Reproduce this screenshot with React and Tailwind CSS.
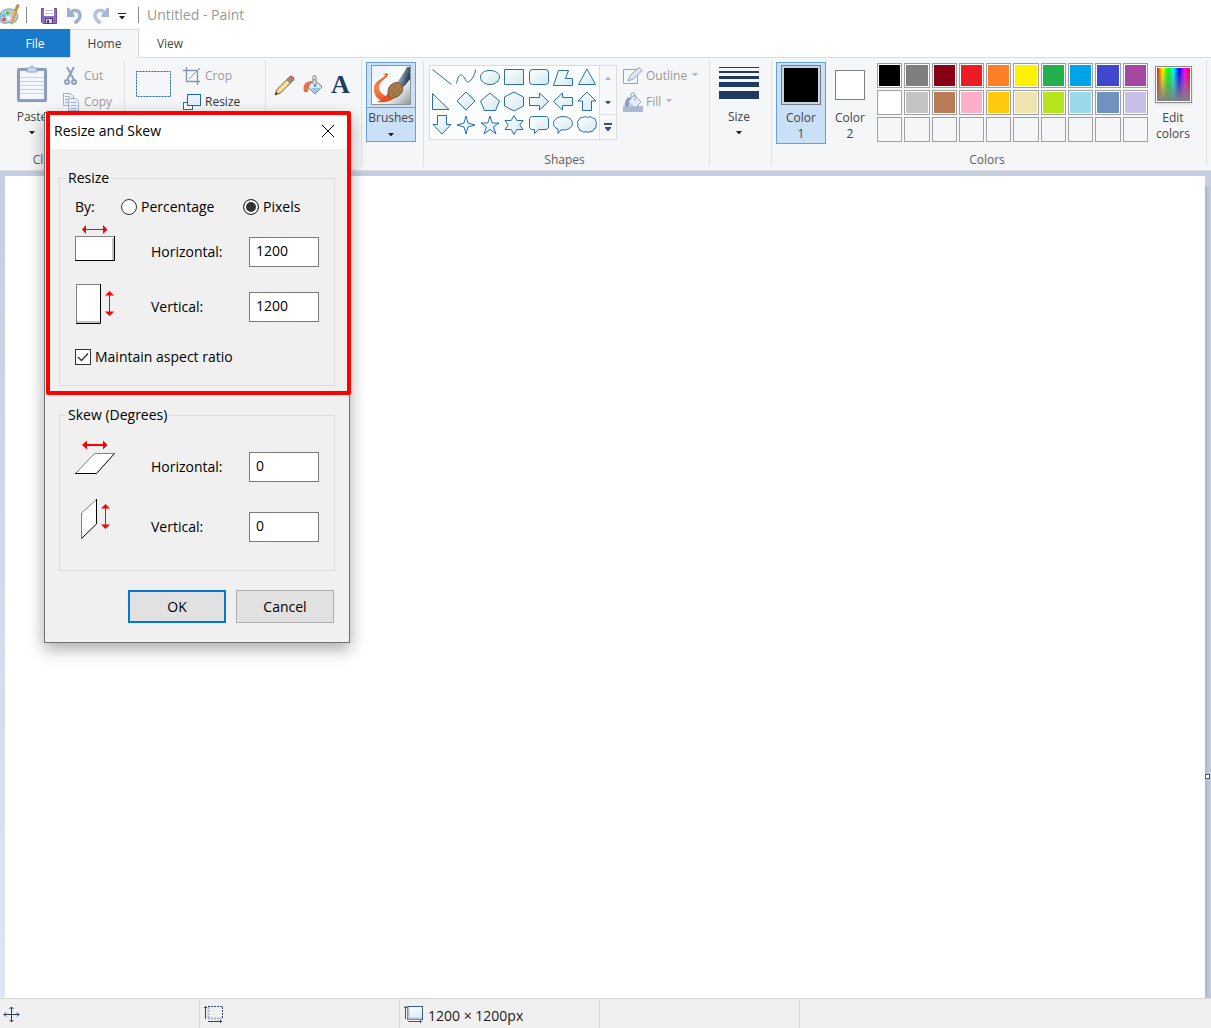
import React, { useState } from 'react'

const PALETTE = [
  '#000000', '#7f7f7f', '#880015', '#ed1c24', '#ff7f27', '#fff200', '#22b14c', '#00a2e8', '#3f48cc', '#a349a4',
  '#ffffff', '#c3c3c3', '#b97a57', '#ffaec9', '#ffc90e', '#efe4b0', '#b5e61d', '#99d9ea', '#7092be', '#c8bfe7',
  null, null, null, null, null, null, null, null, null, null,
]

// Outlines are drawn on a 24x24 cell
const SHAPES = [
  ['Line', 'M2.5 3.5 21.5 18.5'],
  ['Curve', 'M2.5 17.5C4 9 7 7 9.5 10.5S13 19 17 14C20 10 21.5 7 21.5 3.5'],
  ['Oval', 'M12 4.5C17.5 4.5 21.5 7.5 21.5 11S17.5 18.5 12 18.5 2.5 15 2.5 11 6.5 4.5 12 4.5Z'],
  ['Rectangle', 'M2.5 3.5H21.5V18.5H2.5Z'],
  ['Rounded rectangle', 'M5.5 3.5H18.5A3 3 0 0 1 21.5 6.5V15.500A3 3 0 0 1 18.5 18.5H5.5A3 3 0 0 1 2.5 15.5V6.5A3 3 0 0 1 5.5 3.5Z'],
  ['Polygon', 'M7.5 4.5H17.5L14.5 12.5H21.5V19.5H2.5Z'],
  ['Triangle', 'M12 3 20.5 18.500H3.5Z'],
  ['Right triangle', 'M2.5 3.500V19.500H19Z'],
  ['Diamond', 'M12 2 21 11 12 20 3 11Z'],
  ['Pentagon', 'M12 3 21.500 11 17.500 20.500H6.500L2.500 11Z'],
  ['Hexagon', 'M12 2 21.5 7V16L12 21 2.5 16V7Z'],
  ['Right arrow', 'M2.500 7.500H12.500V3L21.500 11.500 12.500 20V15.500H2.500Z'],
  ['Left arrow', 'M21.500 7.500H11.500V3L2.500 11.500 11.500 20V15.500H21.500Z'],
  ['Up arrow', 'M12 2 21 11H16.500V20.500H7.500V11H3Z'],
  ['Down arrow', 'M7.500 1.500H16.500V10.500H21L12 20 3 10.500H7.500Z'],
  ['Four-point star', 'M12 2 14 9 21 11 14 13 12 20 10 13 3 11 10 9Z'],
  ['Five-point star', 'M12 2 14.200 9H21L15.500 13 18 20 12 15.500 6 20 8.500 13 3 9H9.800Z'],
  ['Six-point star', 'M12 1.500 14.800 6.500H21L17.800 11 21 15.500H14.800L12 20.500 9.200 15.500H3L6.200 11 3 6.500H9.200Z'],
  ['Rounded callout', 'M4.500 2.500H19.500L21.500 4.500V13.500L19.500 15.500H11.500L7.500 19.500V15.500H4.500L2.500 13.500V4.500Z'],
  ['Oval callout', 'M12 2.500C17.500 2.500 21.500 5.500 21.500 9.500S17 16 12 16L10 15.800 7 19.500V15C4 14 2.500 12 2.500 9.500 2.500 5.500 6.500 2.500 12 2.500Z'],
  ['Cloud callout', 'M7.500 3.500Q9.500 1.500 12.500 3.500Q15.500 1.500 17.500 4Q20.500 3.500 20.500 6.500Q22.500 8.500 21 11Q22 14.500 19 15Q18 18.500 15 17.500Q13 19.500 11 17.500Q8.500 19.500 7 17Q4 17.500 4 14.500Q1.500 13 3 10Q1.500 7.500 4 6Q4.500 3 7.500 3.500Z'],
]

function Caret({ className = 'text-[#262626]' }) {
  return (
    <svg width="6" height="3" viewBox="0 0 6 3" className={className} aria-hidden="true">
      <path d="M0 0H6L3.500 3H2.500Z" fill="currentColor" />
    </svg>
  )
}

function Group({ label, className, children }) {
  return (
    <section className={`flex flex-col border-r border-[#e1e2e4] ${className}`}>
      <div className="flex h-[92px] items-start">{children}</div>
      <div className="-ml-1 h-[15px] text-center leading-4 text-[#5c5c5c]">{label}</div>
    </section>
  )
}

function TitleBar() {
  return (
    <header className="flex h-[29px] items-center bg-white">
      <svg width="20" height="22" viewBox="0 0 20 22" aria-hidden="true">
        <path d="M0 10C3 4.500 10 4 14 6 18 8 19 13 16 17 13 20 9 18 7 19 3 20 0 18 0 15Z" fill="#b4d2e6" stroke="#6f93ad" />
        <circle cx="4" cy="15.500" r="2" fill="#e2574c" />
        <circle cx="3.500" cy="11.500" r="1.800" fill="#7db6d8" />
        <circle cx="7.500" cy="9" r="1.800" fill="#57b947" />
        <circle cx="12" cy="8.500" r="1.600" fill="#f2c230" />
        <circle cx="8.500" cy="14" r="1.800" fill="#fff" />
        <path d="M11.500 20 16.500 6" stroke="#e99a45" strokeWidth="2.500" />
        <path d="M15.500 6.500 18.500 0.500" stroke="#c0894f" strokeWidth="3" />
      </svg>
      <span className="ml-1.5 h-4 w-px bg-[#8c8c8c]" />
      <button className="ml-3.5 mt-0.5" aria-label="Save">
        <svg width="17" height="16" viewBox="0 0 17 16">
          <path d="M0.500 0.500H15.500V15.500H2L0.500 14Z" fill="#8f6cc0" stroke="#6c4ba3" />
          <path d="M3 0H13V8H3Z" fill="#fff" />
          <path d="M4 2.500H12M4 5.500H12" stroke="#c9bddd" />
          <path d="M4 10H12V15.500H4Z" fill="#4b3c6b" />
          <path d="M5 11H11V15H5Z" fill="#d9d2e6" />
          <path d="M6 12H8V15H6Z" fill="#4b3c6b" />
        </svg>
      </button>
      <button className="ml-2 mt-px" aria-label="Undo">
        <svg width="18" height="19" viewBox="0 0 18 19">
          <path d="M4 7.500C7 2.500 14 4 14 9.500 14 13 12 15 8.500 17" fill="none" stroke="#9fb0cf" strokeWidth="3.500" />
          <path d="M1 1.500 4 2.500V5L8.500 8.500V11H1Z" fill="#9fb0cf" />
        </svg>
      </button>
      <button className="ml-2 mt-px" aria-label="Redo">
        <svg width="18" height="19" viewBox="0 0 18 19">
          <path d="M14 7.500C11 2.500 3 4 3 9.500 3 13 5 15 8.500 17" fill="none" stroke="#b4c1d8" strokeWidth="3.500" />
          <path d="M17 1.500 14 2.500V5L9.500 8.500V11H17Z" fill="#a6b5d0" />
        </svg>
      </button>
      <button className="ml-2 mt-1" aria-label="Customize Quick Access Toolbar">
        <svg width="8" height="7" viewBox="0 0 8 7">
          <path d="M0 0.500H8" stroke="#222" />
          <path d="M1 3H7L4.500 6H3.500Z" fill="#222" />
        </svg>
      </button>
      <span className="ml-3 h-4 w-px bg-[#8c8c8c]" />
      <h1 className="ml-2 text-[14px] text-[#999]">Untitled - Paint</h1>
    </header>
  )
}

function Tabs() {
  return (
    <nav className="flex h-7 text-[#444]">
      <button className="w-[70px] bg-[#1979ca] pt-0.5 text-white">File</button>
      <button className="relative z-10 -mb-px w-[69px] border border-b-0 border-[#dadbdc] bg-[#f5f6f7]">Home</button>
      <button className="w-[62px] pt-0.5">View</button>
    </nav>
  )
}

function ClipboardGroup() {
  return (
    <Group label="Clipboard" className="w-[125px]">
      <button className="ml-[13px] mt-[5px] flex w-[38px] flex-col items-center">
        <svg width="32" height="38" viewBox="0 0 32 38">
          <rect x="1.500" y="3.500" width="29" height="33" rx="1" fill="#8e9fc1" stroke="#8395b8" />
          <path d="M4 6H28V34H4Z" fill="#f4f8fe" />
          <path d="M4 12.500H28M4 16.500H28M4 20.500H28M4 24.500H28M4 28.500H28" stroke="#c3d2ea" />
          <path d="M11 3H14Q16-1 18 3H21V7H11Z" fill="#cdd9ea" stroke="#8fa2c2" />
        </svg>
        <span className="mt-1 leading-5 text-[#444]">Paste</span>
        <Caret className="mt-1 text-[#262626]" />
      </button>
      <div className="ml-3 mt-[3px] flex flex-col text-[#9a9a9a]">
        <button className="flex h-[26px] items-center gap-[5px]">
          <svg width="16" height="20" viewBox="0 0 16 20" fill="none" stroke="#8c9fc0">
            <path d="M4 1 10.500 13M11 1 4.500 13" strokeWidth="2" />
            <circle cx="4" cy="16" r="2" strokeWidth="2" />
            <circle cx="11" cy="16" r="2" strokeWidth="2" />
          </svg>
          Cut
        </button>
        <button className="flex h-[26px] items-center gap-[5px]">
          <svg width="16" height="20" viewBox="0 0 16 20" fill="#eef3fb" stroke="#9fb0cd">
            <path d="M0.500 1.500H7.500L10.500 4.500V13.500H0.500Z" />
            <path d="M2 4.500H7M2 7.500H6M2 10.500H5" />
            <path d="M5.500 6.500H12.500L15.500 9.500V18.500H5.500Z" />
            <path d="M7.500 10.500H13.500M7.500 13.500H13.500M7.500 16.500H13.500" />
          </svg>
          Copy
        </button>
      </div>
    </Group>
  )
}

function ImageGroup() {
  return (
    <Group label="Image" className="w-[141px]">
      <button className="ml-[11px] mt-[11px]" aria-label="Select">
        <svg width="36" height="27" viewBox="0 0 36 27">
          <rect x="0.500" y="0.500" width="34" height="25" fill="#f4f6f9" stroke="#1f68a8" strokeDasharray="2 1" />
        </svg>
      </button>
      <div className="ml-[11px] mt-[3px] flex flex-col">
        <button className="flex h-[26px] items-center gap-1 text-[#9a9a9a]">
          <svg width="18" height="18" viewBox="0 0 18 18" fill="none" stroke="#8598bb">
            <path d="M3.500 0V14.500H17M0 3.500H14.500V18" strokeWidth="1.400" />
            <path d="M6 12 17 1" />
          </svg>
          Crop
        </button>
        <button className="flex h-[26px] items-center gap-1 text-[#333]">
          <svg width="18" height="16" viewBox="0 0 18 16" stroke="#1f68a8">
            <rect x="0.500" y="8.500" width="9" height="7" fill="#fff" />
            <rect x="4.500" y="0.500" width="13" height="11" fill="#eaf3fb" />
          </svg>
          Resize
        </button>
      </div>
    </Group>
  )
}

function ToolsGroup() {
  return (
    <Group label="Tools" className="w-24">
      <div className="ml-2 mt-[13px] flex h-6 items-center gap-2">
        <button aria-label="Pencil">
          <svg width="21" height="21" viewBox="0 0 21 21">
            <path d="M1 20 3 14.500 14.500 3 18 6.500 6.500 18Z" fill="#f5d37e" stroke="#77683d" />
            <path d="M5 16 16 5" stroke="#fff0b8" strokeWidth="1.500" />
            <path d="M14 3.500 16.500 1Q19.500 1 20 4.500L17.500 7Z" fill="#d66b70" stroke="#85646c" />
            <path d="M13 4.500 16.500 8" stroke="#5e9c75" strokeWidth="1.500" />
            <path d="M1 20 2 17 4 19Z" fill="#333" />
          </svg>
        </button>
        <button aria-label="Fill with color">
          <svg width="20" height="20" viewBox="0 0 20 20">
            <path d="M1 17C-1 9 3 6 10 6L6 10 5 17Z" fill="#ee7042" />
            <path d="M11 4 19 12 12 19 5 12Z" fill="#dcebf8" stroke="#5d87b3" />
            <path d="M8 13H18L12 18.500Z" fill="#9cc2e6" />
            <path d="M10 9V2Q11.500-1 13 2V10" fill="none" stroke="#a0a0a0" strokeWidth="1.300" />
            <circle cx="12" cy="10.500" r="1.200" fill="#777" />
          </svg>
        </button>
        <button className="font-['Liberation_Serif',serif] text-[26px] font-bold leading-6 text-[#1e3a5f]">A</button>
      </div>
    </Group>
  )
}

function BrushesGroup() {
  return (
    <Group className="w-[62px]">
      <button className="ml-1 mt-0.5 flex h-20 w-[50px] flex-col items-center border border-[#62a2e4] bg-[#c9e0f7] text-[#444]">
        <span className="flex h-[45px] w-full justify-center border-b border-[#62a2e4] pt-0.5">
          <svg width="40" height="40" viewBox="0 0 40 40">
            <defs>
              <linearGradient id="brushPaper" x1="0" y1="0" x2="1" y2="1">
                <stop offset="0" stopColor="#e6f2fa" />
                <stop offset="0.500" stopColor="#fff" />
                <stop offset="0.700" stopColor="#e3e7ea" />
                <stop offset="1" stopColor="#8d979e" />
              </linearGradient>
              <linearGradient id="brushHandle" x1="0" y1="0" x2="1" y2="0.500">
                <stop offset="0" stopColor="#eef1f4" />
                <stop offset="0.400" stopColor="#8ea1b5" />
                <stop offset="1" stopColor="#1f3347" />
              </linearGradient>
              <linearGradient id="paintStroke" x1="0" y1="0" x2="0" y2="1">
                <stop offset="0" stopColor="#e8451d" />
                <stop offset="0.500" stopColor="#f58a4e" />
                <stop offset="1" stopColor="#e5501f" />
              </linearGradient>
            </defs>
            <rect x="0.500" y="0.500" width="39" height="39" fill="url(#brushPaper)" stroke="#8f9499" />
            <path d="M26 18C30 12 34 6 36 2H39V14C36 18 34 21 31 23Z" fill="url(#brushHandle)" />
            <path d="M12 10Q15 7 17 9C17 13 8 16 8 22 8 27 12 30 17 32L14 37C6 35 2 29 3 22 4 15 13 14 15 9.500Z" fill="url(#paintStroke)" />
            <path d="M18 27C15 31 11 35 6 37 13 38 19 37 23 33Z" fill="#df4f26" />
            <path d="M17 27C17 21 22 17 27 17.500 31 19 33 23 31 27 29 31 23 34 20 33 18 31 17 30 17 27Z" fill="#a87c4c" stroke="#7b5833" />
            <path d="M19 28 27 19M21 31 30 22M24 32 31 26M22 20 29 29M19 24 25 32" stroke="#8b6236" strokeWidth="0.600" />
          </svg>
        </span>
        <span className="leading-5">Brushes</span>
        <Caret className="mt-[5px] text-[#262626]" />
      </button>
    </Group>
  )
}

function ShapesGroup() {
  return (
    <Group label="Shapes" className="w-[286px]">
      <div className="ml-[5px] mt-[5px] flex h-[75px] w-[188px]">
        <div className="grid w-[170px] grid-cols-7 content-start border border-r-0 border-[#d9dcdf] bg-[#fcfdfe]">
          {SHAPES.map(([name, d]) => (
            <button key={name} aria-label={name} className="h-6 w-6">
              <svg width="24" height="24" viewBox="0 0 24 24">
                <path
                  d={d}
                  fill={name === 'Line' || name === 'Curve' ? 'none' : 'url(#shapeFill)'}
                  stroke="#2a6fa8"
                />
              </svg>
            </button>
          ))}
          <svg width="0" height="0" className="absolute">
            <linearGradient id="shapeFill" x1="0" y1="0" x2="1" y2="1">
              <stop offset="0" stopColor="#fff" />
              <stop offset="1" stopColor="#d3e9f0" />
            </linearGradient>
          </svg>
        </div>
        <div className="flex w-[18px] flex-col border border-[#dcdee0] bg-[#f7f8f9]">
          <button className="flex flex-1 items-center justify-center" aria-label="Scroll up">
            <Caret className="rotate-180 text-[#b0b5bf]" />
          </button>
          <button className="flex flex-1 items-center justify-center" aria-label="Scroll down">
            <Caret className="text-[#3c506c]" />
          </button>
          <button className="flex flex-1 items-center justify-center border-t border-[#dcdee0]" aria-label="More shapes">
            <svg width="8" height="8" viewBox="0 0 8 8" fill="#3c506c">
              <path d="M0 0H8V2H0ZM1 4H7V5L4.500 8H3.500L1 5Z" />
            </svg>
          </button>
        </div>
      </div>
      <div className="ml-1.5 mt-[3px] flex flex-col text-[#9a9a9a]">
        <button className="flex h-[26px] items-center gap-[3px]">
          <svg width="20" height="18" viewBox="0 0 20 18">
            <path d="M13 2.500H0.500V16.500H14.500V9" fill="#f4f7fb" stroke="#8fa3c4" />
            <path d="M5 14 7 9 15.500 0.500 19 3.500 10.500 12Z" fill="#dce5f2" stroke="#8fa3c4" />
          </svg>
          Outline
          <Caret className="ml-0.5 mb-1 text-[#b5b5b5]" />
        </button>
        <button className="flex h-[26px] items-center gap-[3px]">
          <svg width="20" height="20" viewBox="0 0 20 20">
            <path d="M0 14H20V20H0Z" fill="#a9b9d4" />
            <path d="M2 15C1 8 4 5 8 5L6 14Z" fill="#8c9fc1" />
            <path d="M11 3 18 10 12 16 5 10Z" fill="#e6edf6" stroke="#93a6c5" />
            <path d="M8 7V2Q10-1 12 2V9" fill="none" stroke="#93a6c5" />
          </svg>
          Fill
          <Caret className="ml-0.5 mb-1 text-[#b5b5b5]" />
        </button>
      </div>
    </Group>
  )
}

function SizeGroup() {
  return (
    <Group className="w-[62px]">
      <button className="ml-2 mt-[7px] flex flex-col items-center text-[#444]">
        <svg width="42" height="32" viewBox="0 0 42 32" fill="#1e3a5f">
          <rect x="1" width="40" height="1" />
          <rect x="1" y="4" width="40" height="2" />
          <rect x="1" y="9" width="40" height="3" />
          <rect x="1" y="15" width="40" height="5" />
          <rect x="1" y="24" width="40" height="8" />
        </svg>
        <span className="mt-2 leading-5">Size</span>
        <Caret className="mt-1 text-[#262626]" />
      </button>
    </Group>
  )
}

function ColorsGroup() {
  return (
    <Group label="Colors" className="w-[435px]">
      <button className="ml-1 mt-0.5 flex h-[82px] w-[50px] flex-col items-center border border-[#62a2e4] bg-[#c9e0f7] pt-0.5 text-[#444]">
        <span className="h-10 w-10 border border-[#7a7a7a] bg-[#c3d3ea] p-0.5">
          <span className="block h-full w-full bg-black" />
        </span>
        <span className="mt-[5px] w-9 leading-4">Color 1</span>
      </button>
      <button className="mt-2.5 flex w-12 flex-col items-center text-[#444]">
        <span className="h-[30px] w-[30px] border border-[#7f7f7f] bg-white" />
        <span className="mt-[10px] w-9 leading-4">Color 2</span>
      </button>
      <div className="ml-[3px] mt-[3px] grid w-[271px] grid-cols-10 gap-0.5">
        {PALETTE.map((color, i) => (
          <button
            key={i}
            aria-label={color ? `Color ${color}` : 'Empty color slot'}
            className={`h-[25px] border border-[#a0a0a0] p-px ${color ? 'bg-white' : 'bg-[#f5f6f7]'}`}
          >
            {color && <span className="block h-full w-full" style={{ backgroundColor: color }} />}
          </button>
        ))}
      </div>
      <button className="mt-1.5 flex w-[50px] flex-col items-center text-[#444]">
        <span className="h-[37px] w-[37px] border border-[#8c8c8c] bg-white p-px shadow-sm">
          <span className="block h-full w-full bg-[linear-gradient(to_top,#808080,transparent),linear-gradient(to_right,#f00,#ff0,#0f0,#0ff,#00f,#f0f,#f00)]" />
        </span>
        <span className="mt-[7px] leading-4">Edit colors</span>
      </button>
    </Group>
  )
}

function WidthResizeIcon() {
  return (
    <svg width="76" height="52" viewBox="0 0 76 52" className="overflow-visible" aria-hidden="true">
      <path d="M7 3.500 11 -1V3H28V-1L32.500 3.500 28 8V4H11V8Z" fill="#f00" />
      <rect x="0.500" y="10.500" width="39" height="24" fill="#fff" stroke="#808080" />
      <path d="M38 12V34" stroke="#c3c3c3" strokeWidth="2" />
      <path d="M0 34.500H39.500V10" fill="none" stroke="#000" />
    </svg>
  )
}

function HeightResizeIcon() {
  return (
    <svg width="76" height="52" viewBox="0 0 76 52" aria-hidden="true">
      <rect x="1.500" y="3.500" width="24" height="38" fill="#fff" stroke="#808080" />
      <path d="M2 41H25" stroke="#c3c3c3" strokeWidth="2" />
      <path d="M1 42.500H25.500V3" fill="none" stroke="#000" />
      <path d="M34.500 10 39 14.500H35V30.500H39L34.500 35 30 30.500H34V14.500H30Z" fill="#f00" />
    </svg>
  )
}

function SkewHorizontalIcon() {
  return (
    <svg width="76" height="60" viewBox="0 0 76 60" aria-hidden="true">
      <path d="M7 8 12 3.500V7H28V3.500L32.500 8 28 12.500V9H12V12.500Z" fill="#f00" />
      <path d="M0.500 36.500 19.500 16.500H39.500L21.500 36.500Z" fill="#fff" />
      <path d="M0.500 36.500 19.500 16.500H39.500" fill="none" stroke="#808080" />
      <path d="M0 36.500H21.500L39.500 16.500" fill="none" stroke="#000" />
    </svg>
  )
}

function SkewVerticalIcon() {
  return (
    <svg width="76" height="60" viewBox="0 0 76 60" aria-hidden="true">
      <path d="M6.500 41.500V16L21.500 2.500V27Z" fill="#fff" />
      <path d="M6.500 41.500V16L21.500 2.500" fill="none" stroke="#808080" />
      <path d="M6.500 41.500 21.500 27V2" fill="none" stroke="#000" />
      <path d="M30.500 7 35 11.500H31V27.500H35L30.500 32 26 27.500H30V11.500H26Z" fill="#f00" />
    </svg>
  )
}

function NumberRow({ id, label, icon, value, onChange, className }) {
  return (
    <div className={`flex items-center ${className}`}>
      {icon}
      <label htmlFor={id} className="w-[98px]">{label}</label>
      <input
        id={id}
        type="text"
        value={value}
        onChange={(e) => onChange(e.target.value)}
        className="h-[30px] w-[70px] border border-[#7a7a7a] bg-white px-1.5 pb-[3px] outline-none"
      />
    </div>
  )
}

function ResizeDialog() {
  const [unit, setUnit] = useState('pixels')
  const [keepRatio, setKeepRatio] = useState(true)
  const [size, setSize] = useState({ width: '1200', height: '1200' })
  const [skew, setSkew] = useState({ x: '0', y: '0' })

  const radioClass =
    'h-4 w-4 appearance-none rounded-full border border-[#333] bg-white checked:bg-[#333] checked:shadow-[inset_0_0_0_2px_#fff]'

  return (
    <div
      role="dialog"
      aria-label="Resize and Skew"
      className="absolute left-11 top-28 z-20 w-[306px] border border-[#707070] bg-[#f0f0f0] text-[14px] leading-5 text-black shadow-[0_6px_16px_rgba(0,0,0,0.35)]"
    >
      <div className="flex h-9 items-center justify-between bg-white pl-[9px] pr-3.5">
        <h2>Resize and Skew</h2>
        <button aria-label="Close">
          <svg width="14" height="14" viewBox="0 0 14 14" stroke="#000">
            <path d="M1 1 13 13M13 1 1 13" />
          </svg>
        </button>
      </div>

      <div className="px-3.5 pb-[19px]">
        <fieldset className="mt-[19px] border border-[#dcdcdc] pb-[7px] pl-[15px]">
          <legend className="-ml-[9px] px-0.5">Resize</legend>
          <div className="flex h-[38px] items-center">
            <span className="w-[46px]">By:</span>
            <label className="flex w-[122px] items-center gap-1">
              <input
                type="radio"
                name="unit"
                className={radioClass}
                checked={unit === 'percentage'}
                onChange={() => setUnit('percentage')}
              />
              Percentage
            </label>
            <label className="flex items-center gap-1">
              <input
                type="radio"
                name="unit"
                className={radioClass}
                checked={unit === 'pixels'}
                onChange={() => setUnit('pixels')}
              />
              Pixels
            </label>
          </div>
          <NumberRow
            id="resize-x"
            label="Horizontal:"
            icon={<WidthResizeIcon />}
            value={size.width}
            onChange={(width) => setSize({ ...size, width })}
            className="h-[52px]"
          />
          <NumberRow
            id="resize-y"
            label="Vertical:"
            icon={<HeightResizeIcon />}
            value={size.height}
            onChange={(height) => setSize({ ...size, height })}
            className="h-[58px]"
          />
          <label className="flex h-[42px] items-center gap-1">
            <span className="relative flex h-4 w-4">
              <input
                type="checkbox"
                className="h-4 w-4 appearance-none border border-[#333] bg-white"
                checked={keepRatio}
                onChange={() => setKeepRatio(!keepRatio)}
              />
              {keepRatio && (
                <svg className="pointer-events-none absolute inset-0" width="16" height="16" viewBox="0 0 16 16">
                  <path d="M3 8 6.500 11.500 13 4.500" fill="none" stroke="#333" strokeWidth="1.400" />
                </svg>
              )}
            </span>
            Maintain aspect ratio
          </label>
        </fieldset>

        <fieldset className="mt-[19px] border border-[#dcdcdc] pb-[13px] pl-[15px] pt-3">
          <legend className="-ml-[9px] px-0.5">Skew (Degrees)</legend>
          <NumberRow
            id="skew-x"
            label="Horizontal:"
            icon={<SkewHorizontalIcon />}
            value={skew.x}
            onChange={(x) => setSkew({ ...skew, x })}
            className="h-[60px]"
          />
          <NumberRow
            id="skew-y"
            label="Vertical:"
            icon={<SkewVerticalIcon />}
            value={skew.y}
            onChange={(y) => setSkew({ ...skew, y })}
            className="h-[60px]"
          />
        </fieldset>

        <div className="mt-[19px] flex justify-end gap-2.5 pr-px">
          <button className="h-[33px] w-[98px] border-2 border-[#0078d7] bg-[#e1e1e1]">OK</button>
          <button className="h-[33px] w-[98px] border border-[#adadad] bg-[#e1e1e1]">Cancel</button>
        </div>
      </div>

      {/* Highlight around the resize options */}
      <div className="pointer-events-none absolute -top-0.5 left-px h-[284px] w-[305px] rounded-xs border-4 border-[#fe0000]" />
    </div>
  )
}

function StatusBar() {
  return (
    <footer className="flex h-[30px] border-t border-[#d7d7d7] bg-[#f0f0f0] pt-px text-[14px] text-[#1a1a1a]">
      <div className="flex w-[200px] items-center border-r border-[#d7d7d7] pl-[3px]">
        <svg width="17" height="17" viewBox="0 0 17 17" stroke="#1e3a5f" fill="none" aria-hidden="true">
          <path d="M8.500 1V16M1 8.500H16M6.500 3 8.500 1 10.500 3M6.500 14 8.500 16 10.500 14M3 6.500 1 8.500 3 10.500M14 6.500 16 8.500 14 10.500" />
        </svg>
      </div>
      <div className="flex w-[200px] items-center border-r border-[#d7d7d7] pl-1">
        <svg width="20" height="18" viewBox="0 0 20 18" fill="none" stroke="#2b4870" aria-hidden="true">
          <path d="M4 1.500H19M18.500 2V14" strokeDasharray="2 1" />
          <path d="M4.500 2V14M4 13.500H18" stroke="#a9b4c4" strokeDasharray="2 1" strokeWidth="2" />
          <path d="M1.500 1V14M0 2.500H3M4 16.500H18M16.500 15V18" />
        </svg>
      </div>
      <div className="flex w-[200px] items-center gap-1 border-r border-[#d7d7d7] pl-1">
        <svg width="20" height="18" viewBox="0 0 20 18" stroke="#3f5a80" aria-hidden="true">
          <rect x="3.500" y="1.500" width="15" height="13" fill="url(#shapeFill)" />
          <path d="M4.500 2V14M4 13.500H18" stroke="#b7c0cc" strokeWidth="2" fill="none" />
          <path d="M1.500 1V14M0 2.500H3M4 16.500H18M16.500 15V18" fill="none" />
        </svg>
        <span className="pt-0.5">1200 × 1200px</span>
      </div>
      <div className="w-[200px] border-r border-[#d7d7d7]" />
    </footer>
  )
}

export default function App() {
  return (
    <div className="relative flex min-h-screen flex-col overflow-hidden bg-white font-['Open_Sans','Noto_Sans',sans-serif] text-[12px]">
      <TitleBar />
      <Tabs />
      <div className="flex border-y border-[#dadbdc] bg-[#f5f6f7] pb-[3px] pt-0.5">
        <ClipboardGroup />
        <ImageGroup />
        <ToolsGroup />
        <BrushesGroup />
        <ShapesGroup />
        <SizeGroup />
        <ColorsGroup />
      </div>
      <main className="relative flex flex-1 bg-[#c6cfe1] pt-[5px]">
        <div className="w-[5px] bg-linear-to-b from-[#c6cfe1] to-[#dce6f4]" />
        <div className="flex-1 bg-white" />
        <div className="mt-2.5 w-1.5 bg-linear-to-r from-[#aab8cb] to-[#c3d0e0]" />
        <span className="absolute right-px top-[603px] h-[5px] w-[5px] border border-[#555] bg-white" />
      </main>
      <StatusBar />
      <ResizeDialog />
    </div>
  )
}
